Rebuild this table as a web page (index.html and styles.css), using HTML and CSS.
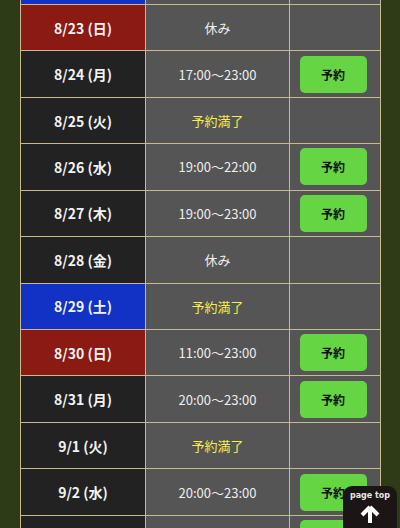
FILE: index.html
```html
<!DOCTYPE html>
<html lang="ja">
<head>
<meta charset="utf-8">
<link rel="stylesheet" href="styles.css">
</head>
<body>
<div class="wrap">
<table class="cal">
<colgroup><col class="c-date"><col class="c-time"><col class="c-btn"></colgroup>
<tbody>
<tr><td class="date sat">8/22 (土)</td><td class="time full">予約満了</td><td class="act"></td></tr>
<tr><td class="date sun">8/23 (日)</td><td class="time">休み</td><td class="act"></td></tr>
<tr><td class="date">8/24 (月)</td><td class="time">17:00〜23:00</td><td class="act"><a class="btn">予約</a></td></tr>
<tr><td class="date">8/25 (火)</td><td class="time full">予約満了</td><td class="act"></td></tr>
<tr><td class="date">8/26 (水)</td><td class="time">19:00〜22:00</td><td class="act"><a class="btn">予約</a></td></tr>
<tr><td class="date">8/27 (木)</td><td class="time">19:00〜23:00</td><td class="act"><a class="btn">予約</a></td></tr>
<tr><td class="date">8/28 (金)</td><td class="time">休み</td><td class="act"></td></tr>
<tr><td class="date sat">8/29 (土)</td><td class="time full">予約満了</td><td class="act"></td></tr>
<tr><td class="date sun">8/30 (日)</td><td class="time">11:00〜23:00</td><td class="act"><a class="btn">予約</a></td></tr>
<tr><td class="date">8/31 (月)</td><td class="time">20:00〜23:00</td><td class="act"><a class="btn">予約</a></td></tr>
<tr><td class="date">9/1 (火)</td><td class="time full">予約満了</td><td class="act"></td></tr>
<tr><td class="date">9/2 (水)</td><td class="time">20:00〜23:00</td><td class="act"><a class="btn">予約</a></td></tr>
<tr><td class="date">9/3 (木)</td><td class="time">20:00〜23:00</td><td class="act"><a class="btn">予約</a></td></tr>
</tbody>
</table>
</div>
<a class="pagetop">
<span class="pt-label">page top</span>
<svg class="pt-arrow" width="22" height="18" viewBox="0 0 22 18"><path d="M11 2 L3 10 M11 2 L19 10 M11 2 L11 18" stroke="#fff" stroke-width="4" fill="none" stroke-linecap="butt" stroke-linejoin="miter"/></svg>
</a>
</body>
</html>
```
FILE: styles.css
```css
html, body {
  margin: 0;
  padding: 0;
  background: #2e3b17;
  font-family: "Noto Sans CJK JP", "Noto Sans", sans-serif;
}
.wrap {
  padding: 0 20px;
  margin-top: -42.5px;
}
.cal {
  width: 360px;
  border-collapse: collapse;
  table-layout: fixed;
  border: 1px solid #c9b98f;
}
.c-date { width: 125px; }
.c-time { width: 144px; }
.c-btn { width: 91px; }
.cal td {
  height: 46.45px;
  padding: 0;
  border: 1px solid #c9b98f;
  text-align: center;
  vertical-align: middle;
  box-sizing: border-box;
}
.date {
  background: #222222;
  color: #f2f2f2;
  font-weight: 700;
  font-size: 14px;
}
.date.sun { background: #8b1a12; }
.date.sat { background: #1132c4; }
.time {
  background: #555555;
  color: #eeeeee;
  font-size: 13px;
}
.time.full { color: #f3f04a; }
.act { background: #555555; }
.btn {
  display: inline-flex;
  align-items: center;
  justify-content: center;
  width: 67px;
  height: 37px;
  margin-left: -4px;
  background: #66d544;
  border-radius: 5px;
  color: #111;
  font-weight: 700;
  font-size: 12px;
}
.pagetop {
  position: fixed;
  left: 343px;
  top: 486px;
  width: 54px;
  height: 50px;
  background: #1c1515;
  border-radius: 9px;
  display: flex;
  flex-direction: column;
  align-items: center;
}
.pt-label {
  margin-top: 5px;
  font-family: "DejaVu Sans", sans-serif;
  font-weight: 700;
  font-size: 8px;
  color: #e6e6e6;
  line-height: 10px;
}
.pt-arrow {
  margin-top: 4px;
}
```
